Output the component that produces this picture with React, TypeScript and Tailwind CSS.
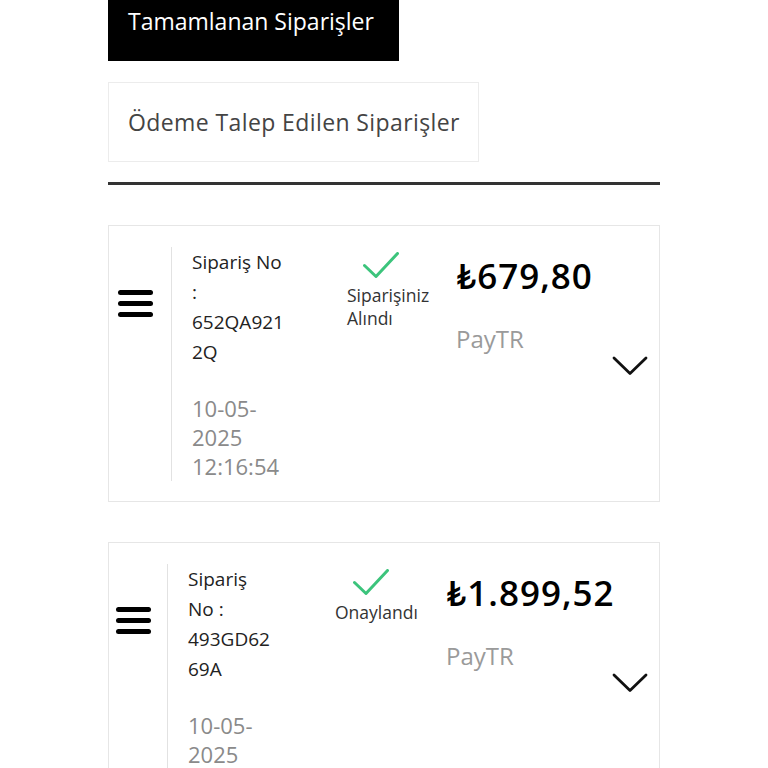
import React from 'react';

type Order = {
  noLines: string[];
  dateLines: string[];
  status: string[];
  price: string;
  method: string;
  leftW: string;
  infoW: string;
  statusW: string;
  checkMl: string;
};

const orders: Order[] = [
  {
    noLines: ['Sipariş No', ':', '652QA921', '2Q'],
    dateLines: ['10-05-', '2025', '12:16:54'],
    status: ['Siparişiniz', 'Alındı'],
    price: '₺679,80',
    method: 'PayTR',
    leftW: 'w-[62px] pl-[9px]',
    infoW: 'w-[176px]',
    statusW: 'w-[109px]',
    checkMl: 'ml-[16px]',
  },
  {
    noLines: ['Sipariş', 'No :', '493GD62', '69A'],
    dateLines: ['10-05-', '2025', '12:16:54'],
    status: ['Onaylandı'],
    price: '₺1.899,52',
    method: 'PayTR',
    leftW: 'w-[58px] pl-[7px]',
    infoW: 'w-[168px]',
    statusW: 'w-[111px]',
    checkMl: 'ml-[18px]',
  },
];

function Hamburger() {
  return (
    <div className="flex flex-col gap-[6px] w-[35px]">
      <span className="block h-[5px] rounded-full bg-black" />
      <span className="block h-[5px] rounded-full bg-black" />
      <span className="block h-[5px] rounded-full bg-black" />
    </div>
  );
}

function Check() {
  return (
    <svg width="36" height="26" viewBox="0 0 36 26" fill="none">
      <path d="M1.5 13.5 L13 24.5 L34.5 1.5" stroke="#3cc47c" strokeWidth="3" strokeLinecap="round" strokeLinejoin="round" />
    </svg>
  );
}

function Chevron() {
  return (
    <svg width="36" height="20" viewBox="0 0 36 20" fill="none">
      <path d="M2 2 L18 17.5 L34 2" stroke="#111" strokeWidth="2.8" strokeLinecap="round" strokeLinejoin="round" />
    </svg>
  );
}

function OrderCard({ o }: { o: Order }) {
  return (
    <div className="border border-[#e6e6e6] bg-white flex items-stretch pt-[21px] pb-[20px]">
      <div className={`${o.leftW} shrink-0 pt-[43px]`}>
        <Hamburger />
      </div>
      <div className={`${o.infoW} shrink-0 border-l border-[#e2e2e2] pl-[20px]`}>
        <div className="text-[19px] leading-[30px] text-[#222]">
          {o.noLines.map((l, i) => (
            <div key={i}>{l}</div>
          ))}
        </div>
        <div className="mt-[27px] text-[22px] leading-[29px] text-[#8a8a8a]">
          {o.dateLines.map((l, i) => (
            <div key={i}>{l}</div>
          ))}
        </div>
      </div>
      <div className={`${o.statusW} shrink-0 pt-[5px]`}>
        <div className={o.checkMl}>
          <Check />
        </div>
        <div className="mt-[6px] text-[17.5px] leading-[23px] text-[#333] whitespace-nowrap">
          {o.status.map((l, i) => (
            <div key={i}>{l}</div>
          ))}
        </div>
      </div>
      <div className="flex-1 flex flex-col pt-[9px] pr-[11px]">
        <div className="text-[35px] leading-[40px] font-semibold tracking-[1px] text-black whitespace-nowrap">{o.price}</div>
        <div className="mt-[28px] text-[24px] leading-[30px] text-[#9a9a9a]">{o.method}</div>
        <div className="self-end mt-[2px]">
          <Chevron />
        </div>
      </div>
    </div>
  );
}

export default function App() {
  return (
    <div className="min-h-screen bg-white overflow-hidden" style={{ fontFamily: '"Open Sans", Lato, sans-serif' }}>
      <div className="w-[552px] mx-auto">
        <div className="-mt-[19px] w-[291px] h-[80px] bg-black flex items-center px-[20px]">
          <span className="text-[23px] text-white whitespace-nowrap">Tamamlanan Siparişler</span>
        </div>
        <div className="mt-[21px] w-[371px] h-[80px] border border-[#ececec] flex items-center px-[19px]">
          <span className="text-[23px] tracking-[0.4px] text-[#444] whitespace-nowrap">Ödeme Talep Edilen Siparişler</span>
        </div>
        <div className="mt-[20px] h-[3px] bg-[#333]" />
        <div className="mt-[40px] flex flex-col gap-[40px] pb-10">
          {orders.map((o, i) => (
            <OrderCard key={i} o={o} />
          ))}
        </div>
      </div>
    </div>
  );
}
